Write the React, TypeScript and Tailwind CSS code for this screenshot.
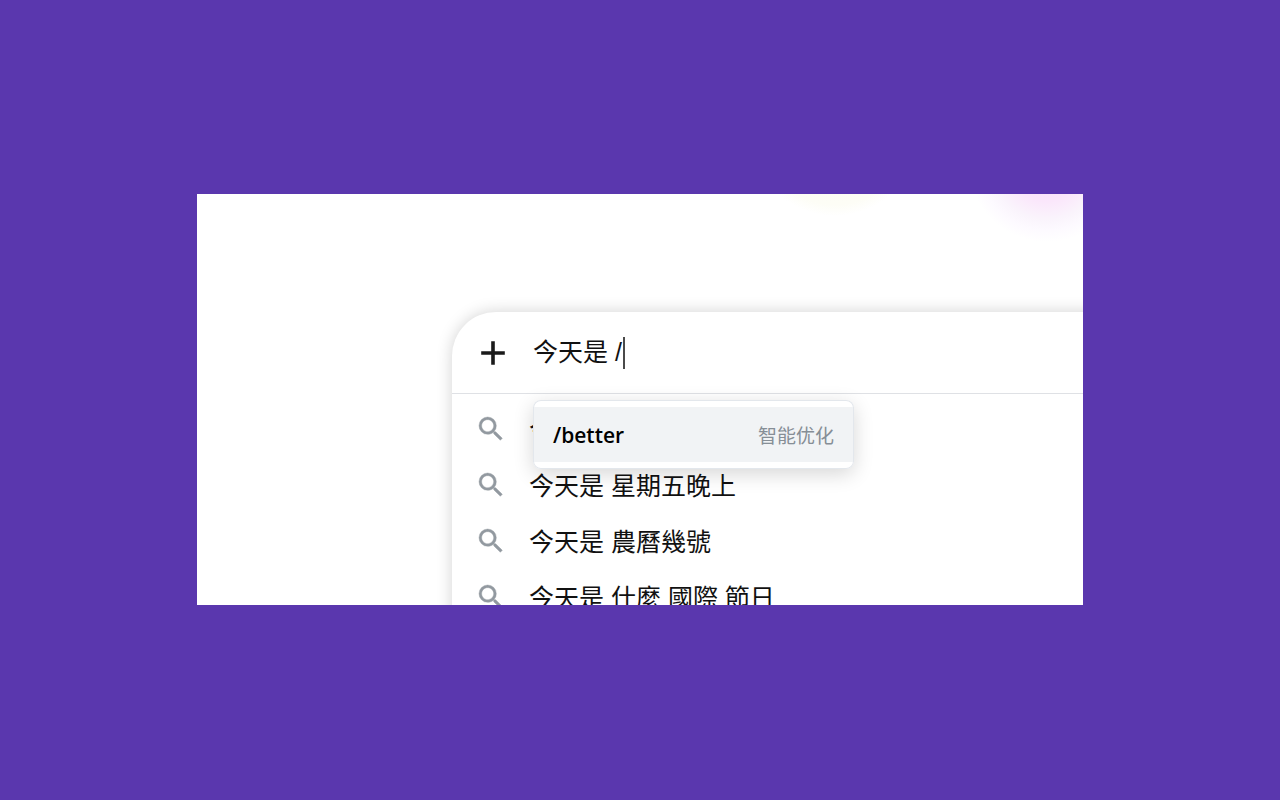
import { useState } from "react";

const CJK_FONT = "font-['Liberation_Sans','Noto_Sans_CJK_SC',sans-serif]";

const suggestions = [
  "今天是",
  "今天是 星期五晚上",
  "今天是 農曆幾號",
  "今天是 什麼 國際 節日",
];

const SearchIcon = () => (
  <svg viewBox="0 0 24 24" className="w-8 h-8 shrink-0" fill="#9299a0" stroke="#9299a0" strokeWidth="0.3" aria-hidden="true">
    <path d="M15.5 14h-.79l-.28-.27A6.471 6.471 0 0 0 16 9.5 6.5 6.5 0 1 0 9.5 16c1.61 0 3.09-.59 4.23-1.57l.27.28v.79l5 4.99L20.49 19l-4.99-5zm-6 0C7.01 14 5 11.99 5 9.5S7.01 5 9.5 5 14 7.01 14 9.5 11.99 14 9.5 14z" />
  </svg>
);

const PlusIcon = () => (
  <svg viewBox="0 0 32 32" className="w-8 h-8" fill="#1a1a1a" aria-hidden="true">
    <path d="M14.2 4.2h3.6v10h10v3.6h-10v10h-3.6v-10h-10v-3.6h10z" />
  </svg>
);

const App = () => {
  const [query, setQuery] = useState("今天是 /");

  return (
    <main
      className={`min-h-screen bg-[#5a37ae] flex items-center justify-center pb-px ${CJK_FONT}`}
    >
      <div className="relative w-full max-w-[886px] h-[411px] overflow-hidden bg-white pt-[118px] pl-[255px]">
        {/* Soft colour glows along the top edge */}
        <div className="absolute -top-32 right-[168px] w-40 h-[150px] rounded-full bg-[radial-gradient(closest-side,#fcfbf0,#fdfdf6_85%,#ffffff)]" />
        <div className="absolute -top-[104px] -right-[42px] w-[156px] h-[152px] rounded-full bg-[radial-gradient(closest-side,#f8dcfa,#fae6fb_45%,#faf4fc_70%,#fdfaff_85%,#ffffff)]" />

        {/* Search box, runs past the right edge */}
        <div className="relative w-[960px] h-[400px] rounded-[44px] bg-white shadow-[0_0_16px_rgba(0,0,0,0.18)]">
          <div className="flex items-center h-[82px] pl-[25px] gap-6 border-b border-[#dfe1e5]">
            <button type="button" aria-label="Add" className="shrink-0">
              <PlusIcon />
            </button>
            <div className="relative flex-1">
              <input
                type="text"
                aria-label="Search"
                value={query}
                onChange={(e) => setQuery(e.target.value)}
                className="block w-full h-8 text-[25px] text-[#111111] outline-none"
              />
              <span className="absolute top-0 left-[90px] w-0.5 h-8 bg-[#4a4a4a]" />
            </div>
          </div>

          <ul className="pt-[7px]">
            {suggestions.map((text) => (
              <li key={text}>
                <button
                  type="button"
                  className="flex items-center w-full h-14 pl-[23px] gap-[22px] text-left"
                >
                  <SearchIcon />
                  <span className="pt-0.5 text-[25px] leading-8 text-[#111111]">{text}</span>
                </button>
              </li>
            ))}
          </ul>

          {/* Slash command menu */}
          <div className="absolute left-[81px] top-[88px] w-[321px] py-[7px] rounded-lg bg-white ring-1 ring-inset ring-[#e3e7ec] shadow-[0_5px_20px_rgba(0,0,0,0.16)]">
            <button
              type="button"
              className="flex items-center justify-between w-full h-[55px] px-[19px] border-x border-[#e3e7ec] bg-[#f1f3f5]"
            >
              <span className="pt-0.5 font-['Open_Sans',sans-serif] text-[21px] font-semibold text-black">
                /better
              </span>
              <span className="pt-1.5 text-[19px] text-[#868e96]">智能优化</span>
            </button>
          </div>
        </div>
      </div>
    </main>
  );
};

export default App;
